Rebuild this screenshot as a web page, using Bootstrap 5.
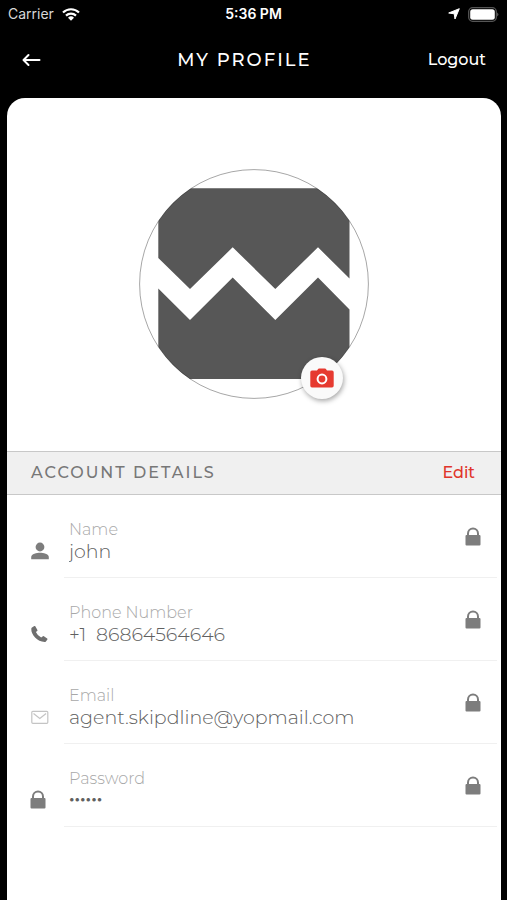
<!DOCTYPE html>
<html lang="en">
<head>
<meta charset="utf-8">
<meta name="viewport" content="width=device-width, initial-scale=1">
<title>My Profile</title>
<link href="https://cdn.jsdelivr.net/npm/bootstrap@5.3.0/dist/css/bootstrap.min.css" rel="stylesheet">
<style>
  body { background: #000; font-family: Montserrat, Inter, sans-serif; }
  svg { display: block; flex: none; }
  .status-bar { height: 28px; padding: 0 8px; font-family: Inter, sans-serif; font-size: 14px; line-height: 28px; color: #d8d8d8; }
  .status-time { font-size: 14px; font-weight: 600; }
  .title-bar { height: 70px; padding: 0 21px 6px; }
  .title-bar h1 { font-size: 18px; line-height: 24px; font-weight: 500; letter-spacing: 2px; }
  .side { flex: 1 1 0; }
  .text-action { font-size: 16px; line-height: 24px; font-weight: 500; }
  .back { width: 40px; line-height: 0; }
  .sheet { margin: 0 6px 0 7px; border-radius: 18px 18px 0 0; }
  .portrait-area { padding: 71px 0 52px; }
  .portrait { width: 230px; height: 230px; }
  .camera { right: 26px; bottom: 0; width: 42px; height: 42px; background: #fafafa; box-shadow: 1px 2px 5px rgba(0,0,0,.35); }
  .section-head { height: 44px; padding: 0 26px 0 24px; background: #f0f0f0; border-top: 1px solid #c8c8c8; border-bottom: 1px solid #c8c8c8; }
  .section-head h2 { font-size: 16px; line-height: 24px; font-weight: 500; letter-spacing: 2px; color: #777; }
  .edit { color: #e0352b; }
  .detail { height: 83px; padding: 0 4px 0 23px; gap: 14px; }
  .detail-icon { width: 20px; padding-top: 46px; }
  .detail-body { border-bottom: 1px solid #f0f0f0; padding: 24px 16px 0 5px; }
  .detail label { font-size: 16px; line-height: 22px; color: #a8a8a8; font-weight: 300; }
  .detail input { font-family: inherit; font-size: 19px; line-height: 22px; height: 22px; min-height: 22px; color: #606060; font-weight: 300; outline: 0; }
  .detail input[type=password] { font-family: Inter, sans-serif; font-size: 11px; font-weight: 600; height: 18px; min-height: 18px; line-height: 18px; }
  .lock { margin-top: 8px; }
</style>
</head>
<body>
<svg class="d-none" aria-hidden="true">
  <symbol id="lock" viewBox="0 0 16 19"><path fill="#7d7d7d" d="M2 8V6.500a6 6 0 0 1 12 0V8h.5a1 1 0 0 1 1 1v8.500a1 1 0 0 1-1 1h-13a1 1 0 0 1-1-1V9a1 1 0 0 1 1-1zM4 8h8V6.500a4 4 0 0 0-8 0z"/></symbol>
</svg>
<div class="d-flex flex-column min-vh-100">
  <div class="status-bar d-flex align-items-center">
    <div class="side d-flex align-items-center gap-2"><span>Carrier</span>
      <svg width="18" height="13" viewBox="0 0 18 13" fill="none" stroke="#fff" stroke-width="2.200"><path d="M1 4.500a11.500 11.500 0 0 1 16 0M4 7.600a7.200 7.200 0 0 1 10 0"/><path fill="#fff" stroke="none" d="M6 9.800a4.300 4.300 0 0 1 6 0L9 12.800z"/></svg>
    </div>
    <span class="status-time text-white">5:36 PM</span>
    <div class="side d-flex align-items-center justify-content-end gap-2">
      <svg width="12" height="12" viewBox="0 0 12 12"><path fill="#fff" stroke="#fff" stroke-linejoin="round" d="M11.300.7 7 11 6.200 5.800.7 5z"/></svg>
      <svg width="31" height="15" viewBox="0 0 31 15"><rect x=".7" y=".7" width="27.600" height="13.600" rx="4" fill="none" stroke="#555" stroke-width="1.300"/><rect x="2.200" y="2.200" width="24.600" height="10.600" rx="2.500" fill="#fff"/><path d="M29.300 5.500q2 2 0 4z" fill="#777"/></svg>
    </div>
  </div>
  <header class="title-bar d-flex align-items-center justify-content-between text-white">
    <button type="button" class="btn p-0 border-0 back" aria-label="Back"><svg width="20" height="14" viewBox="0 0 20 14" fill="none" stroke="#fff" stroke-width="2" stroke-linecap="round" stroke-linejoin="round"><path d="M18.500 7H3M7.500 2 2.500 7l5 5"/></svg></button>
    <h1 class="m-0">MY PROFILE</h1>
    <a href="#" class="text-action text-white text-decoration-none">Logout</a>
  </header>
  <main class="sheet bg-white flex-grow-1">
    <div class="portrait-area d-flex justify-content-center">
      <div class="portrait position-relative">
        <svg width="230" height="230" viewBox="0 0 230 230" role="img" aria-label="Profile picture">
          <clipPath id="round"><circle cx="115" cy="115" r="114.500"/></clipPath>
          <g clip-path="url(#round)" fill="#575757"><path d="M19.300 19.300H210.500V109.500L179 78.300 136.300 120 93.700 78.300 51 120 19.300 89z"/><path d="M19.300 119.500 51 151 93.700 108.500 136.300 151 179 108.500 210.500 140.500V210H19.300z"/></g>
          <circle cx="115" cy="115" r="114.400" fill="none" stroke="#000" stroke-opacity=".35"/>
        </svg>
        <button type="button" class="camera btn border-0 rounded-circle position-absolute p-0 d-flex align-items-center justify-content-center" aria-label="Change photo">
          <svg width="24" height="20" viewBox="0 0 24 20"><path fill="#e63a30" d="M2 2.500h5L8.300.8Q8.600.4 9.200.4h5.600q.6 0 .9.400L17 2.500h5A1.700 1.700 0 0 1 23.700 4.200v13.600a1.700 1.700 0 0 1-1.700 1.700H2A1.700 1.700 0 0 1 .3 17.800V4.200A1.700 1.700 0 0 1 2 2.500z"/><circle cx="12" cy="11" r="4.400" fill="none" stroke="#fff" stroke-width="2"/></svg>
        </button>
      </div>
    </div>
    <div class="section-head d-flex align-items-center justify-content-between">
      <h2 class="m-0">ACCOUNT DETAILS</h2>
      <a href="#" class="text-action edit text-decoration-none">Edit</a>
    </div>
    <div class="detail d-flex">
      <div class="detail-icon"><svg width="20" height="20" viewBox="0 0 20 20" fill="#7d7d7d"><circle cx="10" cy="6" r="4.400"/><path d="M1.200 18.200v-2.200c0-3 5.600-4.300 8.800-4.300s8.800 1.300 8.800 4.300v2.200z"/></svg></div>
      <div class="detail-body d-flex flex-grow-1 align-items-start">
        <div class="d-flex flex-column flex-grow-1"><label for="name">Name</label><input id="name" class="form-control-plaintext p-0" type="text" value="john" readonly></div>
        <svg class="lock" width="16" height="19"><use href="#lock"/></svg>
      </div>
    </div>
    <div class="detail d-flex">
      <div class="detail-icon"><svg width="20" height="20" viewBox="0 0 20 20" fill="#6f6f6f"><path d="M2 3.600 4.300 2q.6-.3 1 .3l2.100 3.600q.3.600-.2 1L5.900 8.100q1.300 3.400 5.300 5.400l1.700-1.300q.5-.4 1 0l3.300 2.300q.5.400.2.900l-1.500 2q-.5.500-1.200.5C7.300 17.600 1 10.500 1.300 4.900q0-.9.700-1.300z"/></svg></div>
      <div class="detail-body d-flex flex-grow-1 align-items-start">
        <div class="d-flex flex-column flex-grow-1"><label for="phone">Phone Number</label><input id="phone" class="form-control-plaintext p-0" type="tel" value="+1  86864564646" readonly></div>
        <svg class="lock" width="16" height="19"><use href="#lock"/></svg>
      </div>
    </div>
    <div class="detail d-flex">
      <div class="detail-icon"><svg width="20" height="20" viewBox="0 0 20 20" fill="none" stroke="#c4c4c4" stroke-width="1.200"><rect x="1.800" y="4.300" width="16" height="12" rx="1"/><path d="m3.500 6.500 6.300 5 6.300-5"/></svg></div>
      <div class="detail-body d-flex flex-grow-1 align-items-start">
        <div class="d-flex flex-column flex-grow-1"><label for="email">Email</label><input id="email" class="form-control-plaintext p-0" type="email" value="agent.skipdline@yopmail.com" readonly></div>
        <svg class="lock" width="16" height="19"><use href="#lock"/></svg>
      </div>
    </div>
    <div class="detail d-flex">
      <div class="detail-icon"><svg width="16" height="19"><use href="#lock"/></svg></div>
      <div class="detail-body d-flex flex-grow-1 align-items-start">
        <div class="d-flex flex-column flex-grow-1"><label for="password">Password</label><input id="password" class="form-control-plaintext p-0" type="password" value="secret" readonly></div>
        <svg class="lock" width="16" height="19"><use href="#lock"/></svg>
      </div>
    </div>
  </main>
</div>
<script src="https://cdn.jsdelivr.net/npm/bootstrap@5.3.0/dist/js/bootstrap.bundle.min.js"></script>
</body>
</html>
